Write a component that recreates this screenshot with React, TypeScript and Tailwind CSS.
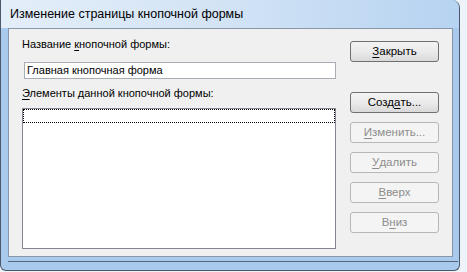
// Диалог "Изменение страницы кнопочной формы" (Access, Vista-тема)
const font = "font-['Segoe_UI','Liberation_Sans',Arial,sans-serif]";

interface BtnProps {
  label: React.ReactNode;
  disabled?: boolean;
  className?: string;
}

function DlgButton({ label, disabled, className = "" }: BtnProps) {
  return (
    <div
      className={
        "h-[21px] w-[89px] rounded-[3px] border flex items-center justify-center text-[11.5px] leading-none " +
        (disabled
          ? "border-[#b5b8bb] bg-[#f4f4f4] text-[#8d8d8d] "
          : "border-[#707070] bg-gradient-to-b from-[#f3f3f3] via-[#ebebeb] to-[#d9d9d9] text-black ") +
        className
      }
    >
      {label}
    </div>
  );
}

const u = (ch: string) => <span className="underline underline-offset-2">{ch}</span>;

export default function App() {
  return (
    <div className={"w-[467px] h-[272px] bg-[#eef3f9] overflow-hidden " + font}>
      <div className="w-[460px] h-[271px] bg-[#a9c9ed] border-l border-r border-b border-[#4a5869] rounded-tr-[8px] rounded-br-[6px] rounded-bl-[6px] flex flex-col">
        {/* заголовок */}
        <div className="h-[28px] shrink-0 rounded-tr-[8px] bg-gradient-to-r from-[#e4eef9] via-[#d2e3f5] to-[#b6d3f1] flex items-center pl-[9px] text-[12.5px] text-black">
          Изменение страницы кнопочной формы
        </div>

        {/* клиентская область */}
        <div className="ml-[7px] w-[445px] h-[229px] shrink-0 border border-[#8796a8] bg-[#f0f0f0] flex pl-[13px]">
          <div className="w-[314px] flex flex-col text-[11px] text-black">
            <div className="mt-[7px] h-[16px] leading-[16px]">
              Название {u("к")}нопочной формы:
            </div>
            <div className="mt-[10px] ml-[2px] h-[17px] w-[312px] border border-[#a9acb2] bg-white pl-[2px] leading-[15px]">
              Главная кнопочная форма
            </div>
            <div className="mt-[6px] h-[16px] leading-[16px]">
              {u("Э")}лементы данной кнопочной формы:
            </div>
            <div className="mt-[7px] h-[141px] w-[314px] border border-[#828790] bg-white">
              <div className="h-[14px] border border-dotted border-black" />
            </div>
          </div>

          <div className="ml-[14px] flex flex-col">
            <DlgButton className="mt-[12px]" label={<>{u("З")}акрыть</>} />
            <DlgButton className="mt-[30px] border-[#3c3c3c]" label={<>Созд{u("а")}ть...</>} />
            <DlgButton className="mt-[9px]" disabled label={<>{u("И")}зменить...</>} />
            <DlgButton className="mt-[9px]" disabled label={<>{u("У")}далить</>} />
            <DlgButton className="mt-[9px]" disabled label={<>{u("В")}верх</>} />
            <DlgButton className="mt-[9px]" disabled label={<>В{u("н")}из</>} />
          </div>
        </div>

        {/* нижняя рамка */}
        <div className="mt-[4px] ml-[7px] h-px w-[450px] bg-[#55657a]" />
      </div>
    </div>
  );
}
